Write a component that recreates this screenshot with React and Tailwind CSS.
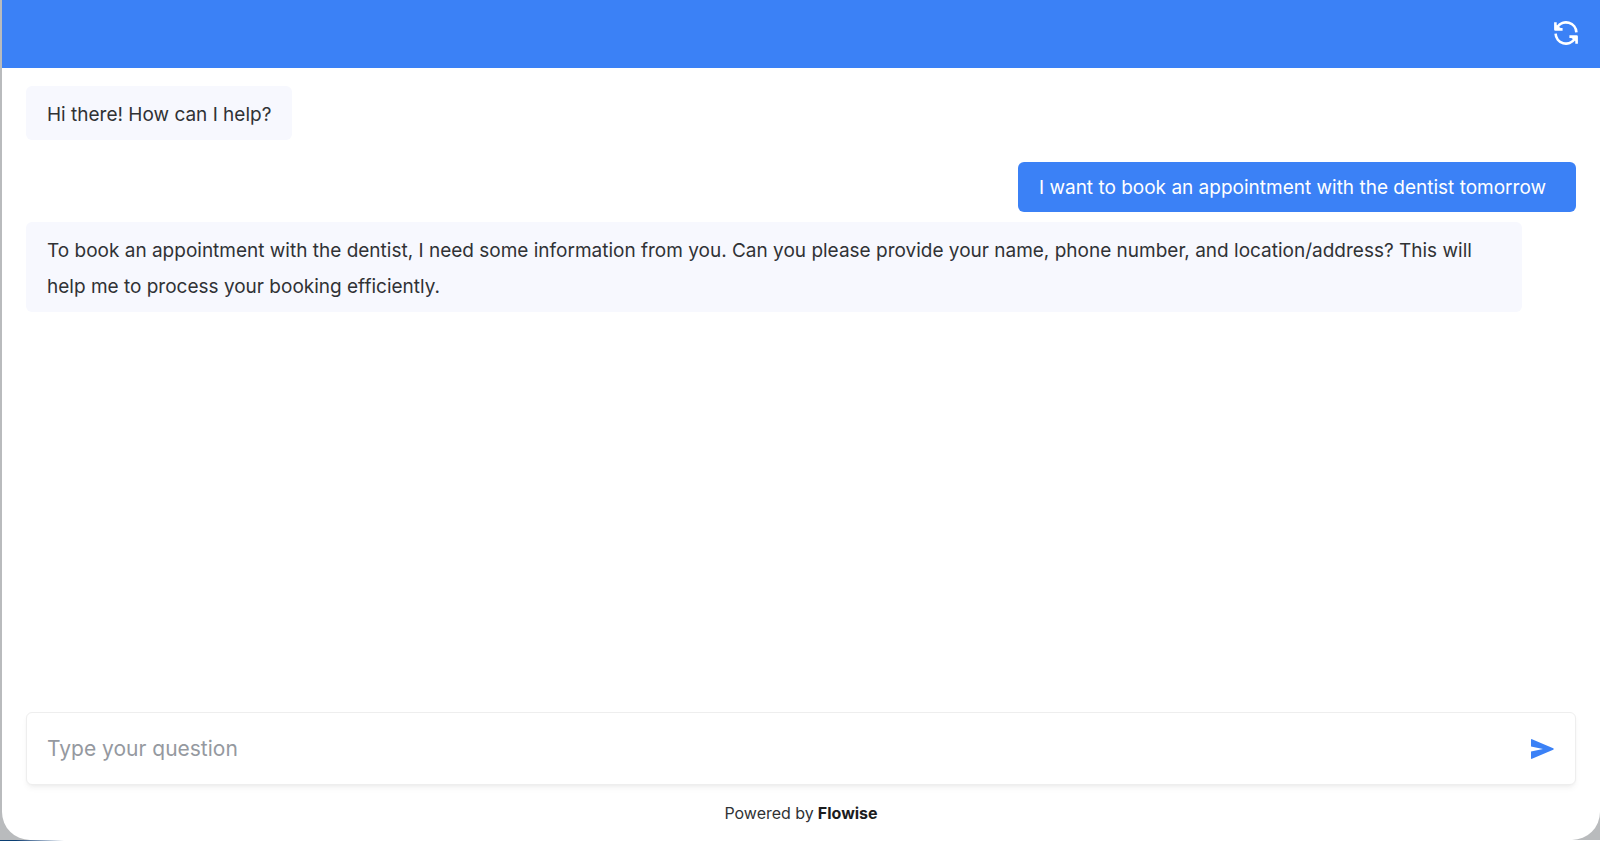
import { useState } from 'react';

const MESSAGES = [
  { id: 1, from: 'bot', text: 'Hi there! How can I help?' },
  { id: 2, from: 'user', text: 'I want to book an appointment with the dentist tomorrow' },
  {
    id: 3,
    from: 'bot',
    text: 'To book an appointment with the dentist, I need some information from you. Can you please provide your name, phone number, and location/address? This will help me to process your booking efficiently.',
  },
];

function ResetIcon() {
  return (
    <svg className="w-6 h-6" viewBox="0 0 24 24" fill="none" stroke="currentColor" strokeWidth="2.6" strokeLinejoin="round">
      <path d="M22.4 11.4A10.4 10.4 0 0 0 3.4 6" />
      <path d="M1.6 12.6A10.4 10.4 0 0 0 20.6 18" />
      <path d="M1.4 1.2V8.4H8.6" />
      <path d="M22.6 22.8V15.6H15.4" />
      <path d="M1.6 3.6L8 8.4H1.6Z" fill="currentColor" strokeWidth="0.6" />
      <path d="M22.4 20.4L16 15.6H22.4Z" fill="currentColor" strokeWidth="0.6" />
    </svg>
  );
}

function SendIcon() {
  return (
    <svg className="w-6 h-6" viewBox="0 0 24 24" fill="currentColor">
      <path d="M1 2.2Q0 1.8 0 2.8V9.6L12 12 0 14.4V21.2Q0 22.2 1 21.8L22.2 12.8Q23.6 12 22.2 11.2Z" />
    </svg>
  );
}

function BotBubble({ text }) {
  return (
    <div className="flex justify-start mr-[54px]">
      <p className="rounded-md bg-[#f7f8fe] px-[21px] pt-[11px] pb-[7px] text-[#303235]">{text}</p>
    </div>
  );
}

function UserBubble({ text }) {
  return (
    <div className="flex justify-end pt-3 ml-[54px]">
      <p className="rounded-md bg-[#3b81f6] pl-[21px] pr-[30px] pt-2 pb-[6px] text-white">{text}</p>
    </div>
  );
}

export default function App() {
  const [question, setQuestion] = useState('');

  return (
    <div className="flex h-screen flex-col bg-[#b9bbbd] pl-[2px] font-['Inter',sans-serif]">
      <div className="flex min-h-0 flex-1 flex-col rounded-b-[28px] bg-white">
        <header className="flex h-[68px] shrink-0 items-center justify-end bg-[#3b81f6] px-[22px] pb-[2px] text-white">
          <button type="button" aria-label="Reset chat">
            <ResetIcon />
          </button>
        </header>

        <main className="flex min-h-0 flex-1 flex-col gap-[10px] overflow-y-auto px-6 pt-[18px] text-[19px] leading-9">
          {MESSAGES.map((m) =>
            m.from === 'bot' ? <BotBubble key={m.id} text={m.text} /> : <UserBubble key={m.id} text={m.text} />
          )}
        </main>

        <form
          onSubmit={(e) => e.preventDefault()}
          className="mx-6 flex h-[73px] shrink-0 items-center rounded-md border border-[#eeeeee] bg-white px-5 shadow-md shadow-black/5"
        >
          <input
            type="text"
            aria-label="Type your question"
            placeholder="Type your question"
            value={question}
            onChange={(e) => setQuestion(e.target.value)}
            className="min-w-0 flex-1 bg-transparent text-[21px] text-[#303235] outline-none placeholder:text-[#9599a0]"
          />
          <button type="submit" aria-label="Send" className="text-[#3b81f6]">
            <SendIcon />
          </button>
        </form>

        <footer className="flex h-[55px] shrink-0 items-center justify-center gap-1 text-[16px] text-[#303235]">
          <span>Powered by</span>
          <a href="#flowise" className="font-bold text-[#1b1c1e]">
            Flowise
          </a>
        </footer>
      </div>
      <div className="-ml-[2px] h-px shrink-0 bg-linear-to-r from-[#0b3f73] from-1% via-white via-4% to-white" />
    </div>
  );
}
